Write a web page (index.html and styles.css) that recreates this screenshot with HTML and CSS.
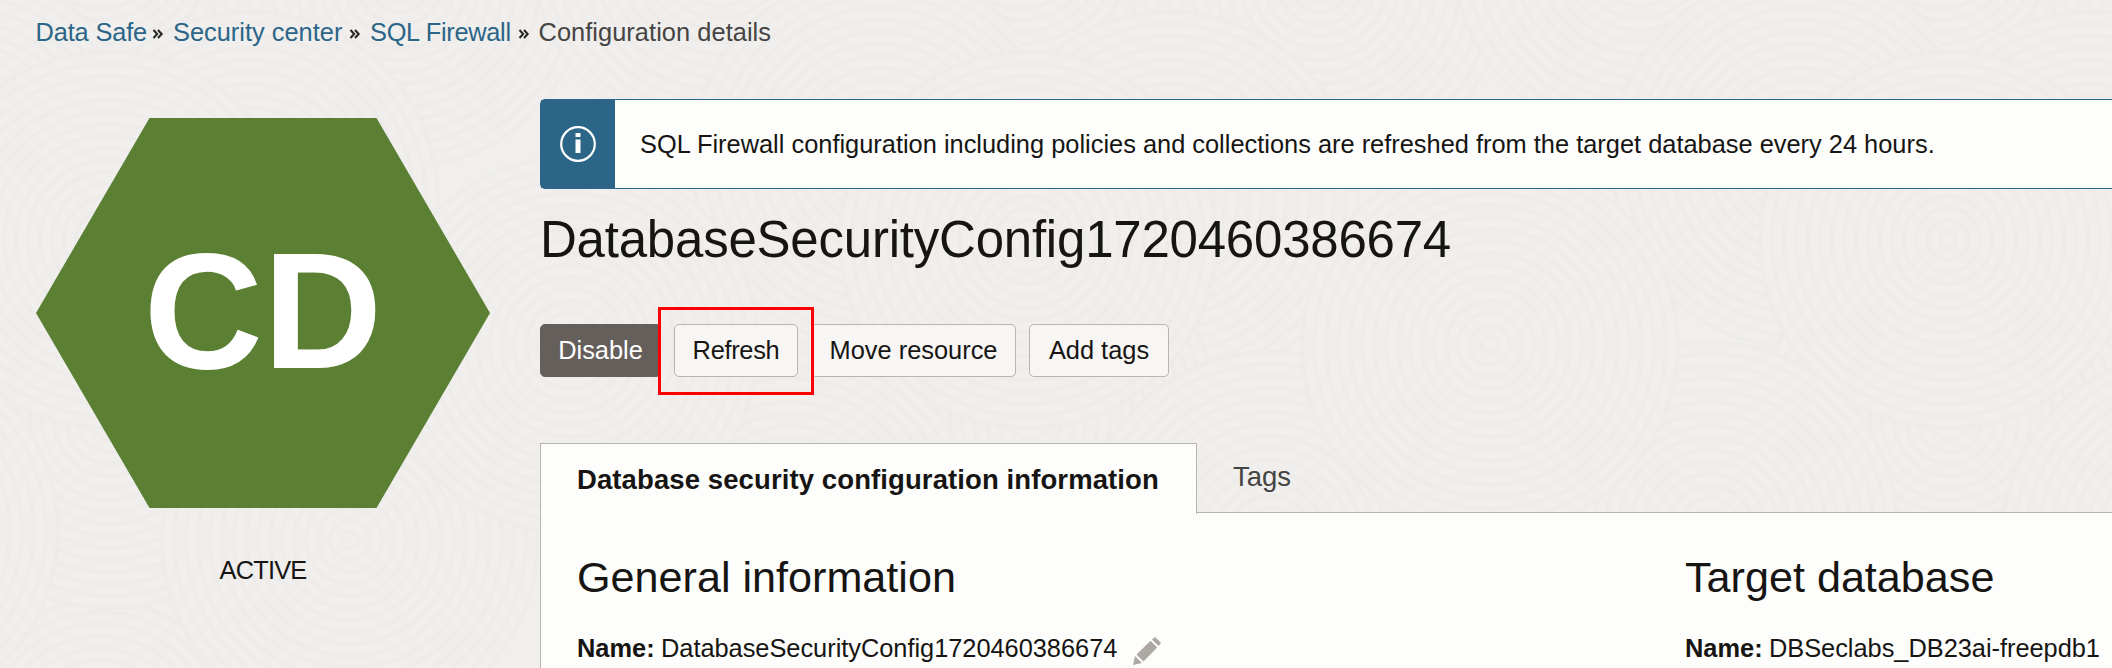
FILE: index.html
```html
<!DOCTYPE html>
<html lang="en">
<head>
<meta charset="utf-8">
<title>Configuration details</title>
<link rel="stylesheet" href="styles.css">
</head>
<body>
<svg class="texture" width="2112" height="668" aria-hidden="true">
  <defs>
    <g id="rings">
      <circle r="190" class="disc"/>
      <circle r="8"/><circle r="20"/><circle r="32"/><circle r="44"/><circle r="56"/><circle r="68"/><circle r="80"/><circle r="92"/>
      <circle r="104"/><circle r="116"/><circle r="128"/><circle r="140"/><circle r="152"/><circle r="164"/><circle r="176"/><circle r="188"/>
    </g>
    <pattern id="swirls" width="920" height="800" patternUnits="userSpaceOnUse" x="100" y="-60">
      <use href="#rings" x="0" y="0"/><use href="#rings" x="920" y="0"/>
      <use href="#rings" x="0" y="800"/><use href="#rings" x="920" y="800"/>
      <use href="#rings" x="300" y="40"/><use href="#rings" x="620" y="10"/>
      <use href="#rings" x="150" y="260"/><use href="#rings" x="780" y="220"/>
      <use href="#rings" x="10" y="480"/><use href="#rings" x="930" y="480"/>
      <use href="#rings" x="250" y="600"/><use href="#rings" x="690" y="590"/>
      <use href="#rings" x="928" y="300"/><use href="#rings" x="8" y="300"/>
      <use href="#rings" x="470" y="405"/>
    </pattern>
  </defs>
  <rect width="2112" height="668" fill="url(#swirls)"/>
</svg>
<nav class="breadcrumb">
  <a class="crumb crumb-1">Data Safe</a><svg class="sep" viewBox="0 0 12 12"><path d="M1.500 2 5.200 6 1.500 10M6 2 9.700 6 6 10"/></svg>
  <a class="crumb crumb-2">Security center</a><svg class="sep" viewBox="0 0 12 12"><path d="M1.500 2 5.200 6 1.500 10M6 2 9.700 6 6 10"/></svg>
  <a class="crumb crumb-3">SQL Firewall</a><svg class="sep" viewBox="0 0 12 12"><path d="M1.500 2 5.200 6 1.500 10M6 2 9.700 6 6 10"/></svg>
  <span class="crumb current">Configuration details</span>
</nav>
<div class="page">
  <aside class="status">
    <div class="hexagon">CD</div>
    <div class="state">ACTIVE</div>
  </aside>
  <main class="main">
    <div class="notice">
      <div class="notice-icon">
        <svg width="36" height="36" viewBox="0 0 36 36"><circle cx="18" cy="18" r="16.8" fill="none" stroke="#fff" stroke-width="2.2"/><path d="M15.500 7h5v4h-5zM15.500 13.500h5v13.500h-5z" fill="#fff"/></svg>
      </div>
      <p class="notice-text">SQL Firewall configuration including policies and collections are refreshed from the target database every 24 hours.</p>
    </div>
    <h1 class="title">DatabaseSecurityConfig1720460386674</h1>
    <div class="actions">
      <button class="btn primary">Disable</button>
      <button class="btn refresh">Refresh<span class="highlight"></span></button>
      <button class="btn move">Move resource</button>
      <button class="btn tags">Add tags</button>
    </div>
    <div class="tabs">
      <div class="tab active">Database security configuration information</div>
      <div class="tab">Tags</div>
    </div>
    <section class="panel">
      <div class="column">
        <h2 class="heading">General information</h2>
        <div class="field"><b>Name:</b><span class="value">DatabaseSecurityConfig1720460386674</span>
          <svg class="pencil" width="28" height="28" viewBox="0 0 28 28"><path d="M0 28 2 19 9 26zM3.500 17.500 17.500 3.800 24.200 10.500 10.500 24.500zM19 2.500 21.300.4Q22 0 22.700.6L27.500 5.300Q28 6 27.400 6.800L25.600 8.900z"/></svg>
        </div>
      </div>
      <div class="column">
        <h2 class="heading">Target database</h2>
        <div class="field"><b>Name:</b><span class="value">DBSeclabs_DB23ai-freepdb1</span></div>
      </div>
    </section>
  </main>
</div>
</body>
</html>
```
FILE: styles.css
```css
* { box-sizing: border-box; }
body {
  margin: 0;
  width: 2112px;
  height: 668px;
  overflow: hidden;
  position: relative;
  background: #f0efed;
  color: #161513;
  font-family: "Liberation Sans", Arial, sans-serif;
  font-size: 25.4px;
}
.texture { position: absolute; left: 0; top: 0; z-index: -1; }
.texture circle { fill: none; stroke: #edecea; stroke-width: 4; }
.texture .disc { fill: #f0efed; stroke: none; }
.breadcrumb {
  display: flex;
  height: 99px;
  padding: 17px 0 0 35.5px;
  line-height: 30px;
  white-space: nowrap;
}
.crumb { color: #2b6587; letter-spacing: -.15px; }
.crumb-1 { width: 110.5px; }
.crumb-2 { width: 170px; letter-spacing: 0; }
.crumb-3 { width: 141.5px; letter-spacing: -.3px; }
.crumb.current { color: #454442; letter-spacing: .05px; }
.sep { width: 12px; height: 12px; margin: 11px 9px 0 6px; fill: none; stroke: #262522; stroke-width: 2; flex: none; }
.page { display: flex; }
.status { width: 540px; flex: none; padding: 19px 0 0 36px; }
.hexagon {
  width: 454px;
  height: 390px;
  clip-path: polygon(0 50%, 25% 0, 75% 0, 100% 50%, 75% 100%, 25% 100%);
  background: #5b8034;
  color: #fff;
  font-size: 165px;
  font-weight: bold;
  line-height: 387px;
  text-align: center;
}
.state { width: 454px; margin-top: 47px; line-height: 30px; text-align: center; letter-spacing: -.8px; }
.main { flex: 1; min-width: 0; }
.notice {
  display: flex;
  width: 1600px;
  height: 90px;
  border: 1px solid #2b6587;
  border-radius: 5px;
  background: #fdfdfb;
}
.notice-icon { width: 74px; display: flex; align-items: center; justify-content: center; background: #2b6587; }
.notice-text { margin: 0; padding-left: 25px; line-height: 89px; white-space: nowrap; }
.title { margin: 18px 0 0; height: 66px; line-height: 66px; font-size: 51px; font-weight: normal; letter-spacing: -.22px; }
.actions { display: flex; gap: 13px; margin-top: 51px; height: 53px; }
.btn {
  position: relative;
  height: 53px;
  padding: 0;
  border: 1px solid #b9b4b0;
  border-radius: 5px;
  background: #f7f6f4;
  color: #161513;
  font: inherit;
  white-space: nowrap;
}
.primary { width: 121px; background: #655f5b; border-color: #655f5b; color: #fff; }
.refresh { width: 124px; z-index: 1; letter-spacing: -.3px; }
.move { width: 205px; }
.tags { width: 140px; }
.highlight { position: absolute; left: -17px; top: -18px; width: 156px; height: 88px; border: 3px solid #f00; }
.tabs { display: flex; margin-top: 66px; height: 69px; }
.tab { padding: 0 36px; font-size: 27.500px; line-height: 68px; color: #454442; white-space: nowrap; }
.tab.active {
  width: 657px;
  height: 71px;
  padding: 0 0 0 36px;
  position: relative;
  z-index: 1;
  border: 1px solid #b9b4b0;
  border-bottom: 0;
  background: #fdfdfb;
  color: #161513;
  font-weight: bold;
  line-height: 71px;
  letter-spacing: .1px;
}
.panel {
  display: grid;
  grid-template-columns: 1108px 1fr;
  width: 1640px;
  height: 190px;
  padding: 37px 0 0 36px;
  border: 1px solid #b9b4b0;
  background: #fdfdfb;
}
.heading { margin: 0; height: 54px; line-height: 54px; font-size: 43.150px; font-weight: normal; white-space: nowrap; }
.field { display: flex; margin-top: 29px; line-height: 30px; white-space: nowrap; }
.field b { width: 84px; flex: none; }
.value { letter-spacing: -.03px; }
.pencil { margin: 4px 0 0 16px; fill: #aea8a4; }
```
